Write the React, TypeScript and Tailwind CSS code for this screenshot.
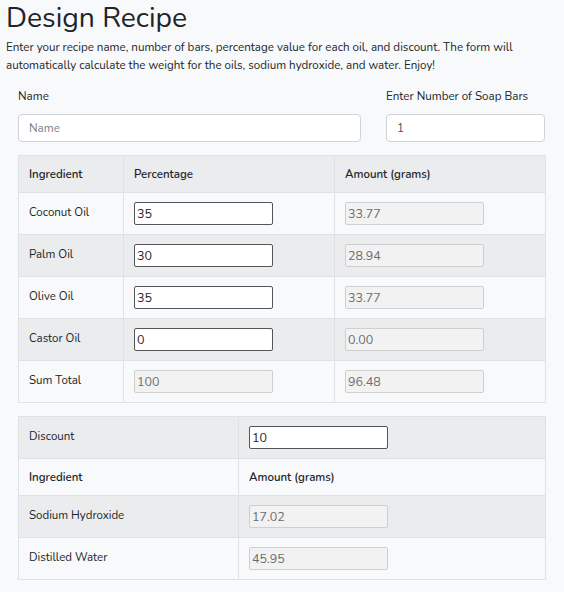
import { useState } from "react";

const oils = [
  { name: "Coconut Oil", pct: "35", amount: "33.77" },
  { name: "Palm Oil", pct: "30", amount: "28.94" },
  { name: "Olive Oil", pct: "35", amount: "33.77" },
  { name: "Castor Oil", pct: "0", amount: "0.00" },
];

function EditBox({ value, onChange }: { value: string; onChange?: (v: string) => void }) {
  return (
    <input
      type="text"
      value={value}
      onChange={(e) => onChange?.(e.target.value)}
      className="block w-[139px] h-[23px] px-[2px] border border-[#555] rounded-[2px] bg-white text-[12.5px] text-[#212529] outline-none"
    />
  );
}

function ReadBox({ value }: { value: string }) {
  return (
    <input
      type="text"
      value={value}
      readOnly
      className="block w-[139px] h-[23px] px-[2px] border border-[#cfcfcf] rounded-[2px] bg-[#f2f2f2] text-[12.5px] text-[#6c6c6c] outline-none"
    />
  );
}

const cell = "border border-[#dee2e6] align-top px-[10px] py-[10px] leading-[18px]";
const boxCell = "border border-[#dee2e6] align-top px-[10px] py-[9px]";
const head = "border border-[#dee2e6] text-left font-semibold px-[10px] py-[10px] leading-[16px]";

export default function App() {
  const [pcts, setPcts] = useState(oils.map((o) => o.pct));
  const [discount, setDiscount] = useState("10");

  return (
    <div className="min-h-[592px] bg-[#f8f9fa] text-[#212529] font-['Nunito','Lato',sans-serif] pl-[6px] pr-[10px]">
      <h1 className="text-[28.3px] leading-[36px] font-normal">Design Recipe</h1>
      <p className="mt-[2px] text-[11.6px] leading-[18px]">
        Enter your recipe name, number of bars, percentage value for each oil, and discount. The form will
        automatically calculate the weight for the oils, sodium hydroxide, and water. Enjoy!
      </p>

      {/* Name + bars */}
      <div className="flex gap-[25px] pl-[12px] mt-[13px]">
        <div className="flex flex-col">
          <label className="text-[11.6px] leading-[18px]">Name</label>
          <input
            type="text"
            placeholder="Name"
            className="mt-[9px] w-[343px] h-[28px] px-[10px] border border-[#ced4da] rounded-[4px] bg-white text-[11.6px] placeholder:text-[#7b8189] outline-none"
          />
        </div>
        <div className="flex flex-col">
          <label className="text-[11.6px] leading-[18px]">Enter Number of Soap Bars</label>
          <input
            type="text"
            defaultValue="1"
            className="mt-[9px] w-[159px] h-[28px] px-[10px] border border-[#ced4da] rounded-[4px] bg-white text-[11.6px] text-[#495057] outline-none"
          />
        </div>
      </div>

      {/* Oils table */}
      <table className="ml-[12px] mt-[13px] w-[527px] border-collapse text-[11.5px] table-fixed">
        <colgroup>
          <col className="w-[105px]" />
          <col className="w-[211px]" />
          <col className="w-[211px]" />
        </colgroup>
        <thead>
          <tr className="bg-[#ebecee]">
            <th className={head}>Ingredient</th>
            <th className={head}>Percentage</th>
            <th className={head}>Amount (grams)</th>
          </tr>
        </thead>
        <tbody>
          {oils.map((o, i) => (
            <tr key={o.name} className={i % 2 === 0 ? "bg-[#f8f9fa]" : "bg-[#ebecee]"}>
              <td className={cell}>{o.name}</td>
              <td className={boxCell}>
                <EditBox
                  value={pcts[i]}
                  onChange={(v) => setPcts(pcts.map((p, j) => (j === i ? v : p)))}
                />
              </td>
              <td className={boxCell}>
                <ReadBox value={o.amount} />
              </td>
            </tr>
          ))}
          <tr className="bg-[#f8f9fa]">
            <td className={cell}>Sum Total</td>
            <td className={boxCell}>
              <ReadBox value="100" />
            </td>
            <td className={boxCell}>
              <ReadBox value="96.48" />
            </td>
          </tr>
        </tbody>
      </table>

      {/* Lye + water table */}
      <table className="ml-[12px] mt-[13px] w-[527px] border-collapse text-[11.5px] table-fixed">
        <colgroup>
          <col className="w-[220px]" />
          <col className="w-[307px]" />
        </colgroup>
        <tbody>
          <tr className="bg-[#ebecee]">
            <td className={cell}>Discount</td>
            <td className={boxCell}>
              <EditBox value={discount} onChange={setDiscount} />
            </td>
          </tr>
          <tr className="bg-[#f8f9fa]">
            <th className={head}>Ingredient</th>
            <th className={head}>Amount (grams)</th>
          </tr>
          <tr className="bg-[#ebecee]">
            <td className={cell}>Sodium Hydroxide</td>
            <td className={boxCell}>
              <ReadBox value="17.02" />
            </td>
          </tr>
          <tr className="bg-[#f8f9fa]">
            <td className={cell}>Distilled Water</td>
            <td className={boxCell}>
              <ReadBox value="45.95" />
            </td>
          </tr>
        </tbody>
      </table>
    </div>
  );
}
